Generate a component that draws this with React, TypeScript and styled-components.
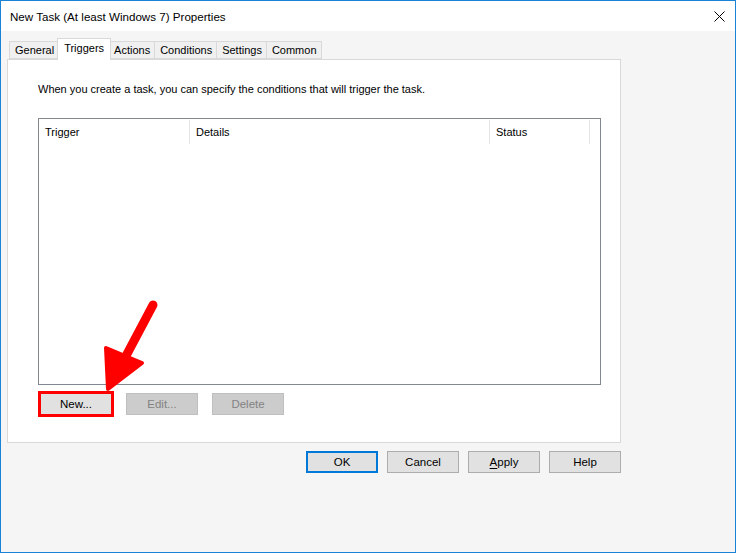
import React from 'react';
import styled, { createGlobalStyle } from 'styled-components';

const GlobalStyle = createGlobalStyle`
  html, body {
    margin: 0;
    padding: 0;
    background: #ffffff;
  }
  * {
    box-sizing: border-box;
  }
`;

const Window = styled.div`
  position: relative;
  width: 736px;
  height: 553px;
  border: 1px solid #1883d7;
  background: #f5f5f5;
  font-family: 'Liberation Sans', Arial, sans-serif;
  font-size: 11px;
  color: #000;
  display: flex;
  flex-direction: column;
`;

const TitleBar = styled.div`
  height: 30px;
  background: #ffffff;
  display: flex;
  align-items: center;
  justify-content: space-between;
  padding: 0 9px 0 9px;
`;

const Title = styled.span`
  font-size: 11.6px;
  padding-top: 1px;
`;

const CloseButton = styled.div`
  width: 12px;
  height: 12px;
  margin-right: 1px;
  display: flex;
  align-items: center;
  justify-content: center;
`;

const Body = styled.div`
  flex: 1;
  padding: 7px 0 0 6px;
  display: flex;
  flex-direction: column;
`;

const TabStrip = styled.div`
  display: flex;
  align-items: flex-end;
  height: 21px;
  padding-left: 2px;
  position: relative;
  z-index: 1;
`;

const Tab = styled.div<{ $active?: boolean }>`
  height: ${(p) => (p.$active ? '22px' : '18px')};
  margin-bottom: ${(p) => (p.$active ? '-1px' : '0')};
  padding: ${(p) => (p.$active ? '0 6px 3px' : '0 4px 0 5px')};
  margin-left: ${(p) => (p.$active ? '-2px' : '0')};
  margin-right: ${(p) => (p.$active ? '-2px' : '0')};
  border: 1px solid #d9d9d9;
  border-bottom: ${(p) => (p.$active ? 'none' : '1px solid #d9d9d9')};
  border-left: ${(p) => (p.$active ? '1px solid #d9d9d9' : 'none')};
  background: ${(p) => (p.$active ? '#ffffff' : '#f0f0f0')};
  display: flex;
  align-items: center;
  position: relative;
  z-index: ${(p) => (p.$active ? 2 : 1)};
  &:first-child {
    border-left: 1px solid #d9d9d9;
  }
`;

const Panel = styled.div`
  width: 614px;
  height: 384px;
  background: #ffffff;
  border: 1px solid #d9d9d9;
  padding: 19px 0 0 30px;
  display: flex;
  flex-direction: column;
`;

const Intro = styled.div`
  height: 20px;
  line-height: 20px;
`;

const ListBox = styled.div`
  margin-top: 19px;
  width: 563px;
  height: 267px;
  border: 1px solid #828790;
  background: #ffffff;
`;

const HeaderRow = styled.div`
  display: flex;
  height: 25px;
  padding-top: 1px;
`;

const HeaderCell = styled.div<{ $width: number }>`
  width: ${(p) => p.$width}px;
  border-right: 1px solid #e5e5e5;
  padding-left: 6px;
  display: flex;
  align-items: center;
  height: 24px;
`;

const ButtonRow = styled.div`
  display: flex;
  align-items: center;
  margin-top: 6px;
`;

const Button = styled.div<{ $disabled?: boolean; $focused?: boolean; $gap?: number }>`
  width: 72px;
  height: 22px;
  margin-left: ${(p) => p.$gap ?? 0}px;
  display: flex;
  align-items: center;
  justify-content: center;
  font-size: 11.5px;
  background: ${(p) => (p.$disabled ? '#cccccc' : '#e1e1e1')};
  color: ${(p) => (p.$disabled ? '#838383' : '#000000')};
  border: ${(p) => (p.$focused ? '2px solid #0078d7' : p.$disabled ? '1px solid #bfbfbf' : '1px solid #adadad')};
`;

const HighlightButton = styled(Button)`
  width: 76px;
  height: 26px;
  border: 3px solid #ff0000;
`;

const Footer = styled.div`
  display: flex;
  gap: 9px;
  padding: 8px 0 0 299px;
`;

const Underline = styled.span`
  text-decoration: underline;
  text-underline-offset: 2px;
`;

const ArrowOverlay = styled.svg`
  position: absolute;
  left: 95px;
  top: 290px;
  pointer-events: none;
`;

const tabs = ['General', 'Triggers', 'Actions', 'Conditions', 'Settings', 'Common'];

export default function App(): React.ReactElement {
  return (
    <>
      <GlobalStyle />
      <Window>
        <TitleBar>
          <Title>New Task (At least Windows 7) Properties</Title>
          <CloseButton>
            <svg width="11" height="11" viewBox="0 0 11 11">
              <path d="M0.5 0.5 L10.5 10.5 M10.5 0.5 L0.5 10.5" stroke="#000" strokeWidth="1" />
            </svg>
          </CloseButton>
        </TitleBar>
        <Body>
          <TabStrip>
            {tabs.map((t) => (
              <Tab key={t} $active={t === 'Triggers'}>
                {t}
              </Tab>
            ))}
          </TabStrip>
          <Panel>
            <Intro>When you create a task, you can specify the conditions that will trigger the task.</Intro>
            <ListBox>
              <HeaderRow>
                <HeaderCell $width={151}>Trigger</HeaderCell>
                <HeaderCell $width={300}>Details</HeaderCell>
                <HeaderCell $width={100}>Status</HeaderCell>
              </HeaderRow>
            </ListBox>
            <ButtonRow>
              <HighlightButton>New...</HighlightButton>
              <Button $disabled $gap={12}>Edit...</Button>
              <Button $disabled $gap={14}>Delete</Button>
            </ButtonRow>
          </Panel>
          <Footer>
            <Button $focused>OK</Button>
            <Button>Cancel</Button>
            <Button>
              <Underline>A</Underline>pply
            </Button>
            <Button>Help</Button>
          </Footer>
        </Body>
        <ArrowOverlay width="70" height="110" viewBox="0 0 70 110">
          <path d="M57 14 L22 80" stroke="#ff0000" strokeWidth="9" strokeLinecap="round" />
          <path
            d="M10 57 L12 98 L46 72 Z"
            fill="#ff0000"
            stroke="#ff0000"
            strokeWidth="4"
            strokeLinejoin="round"
          />
        </ArrowOverlay>
      </Window>
    </>
  );
}
